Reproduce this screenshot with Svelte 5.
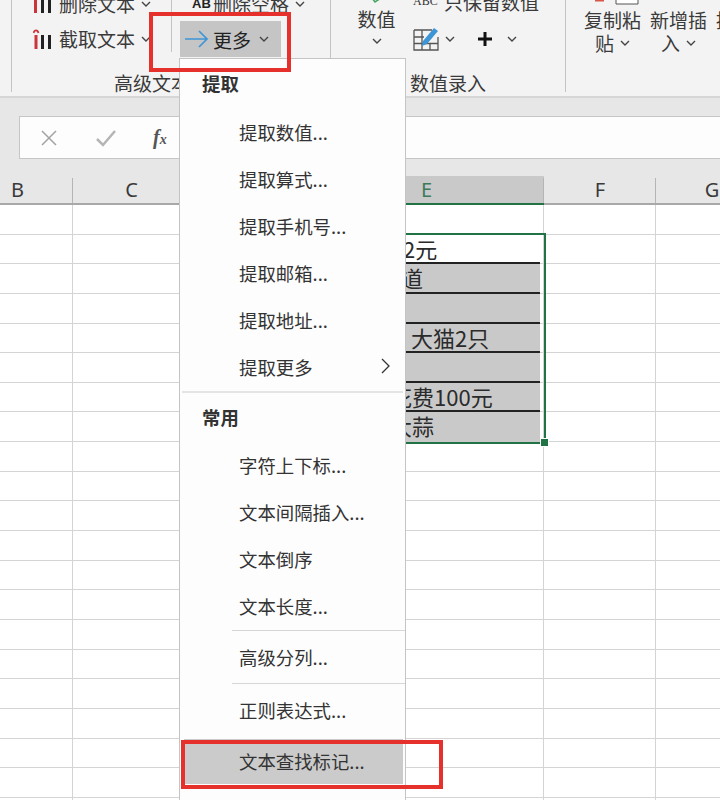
<script>
	const rows = [
		{ text: '', selected: false },
		{ text: '2元', left: 96, selected: false, lined: true },
		{ text: '道', left: 94, selected: true, lined: true },
		{ text: '', selected: true, lined: true },
		{ text: '大猫2只', left: 104, selected: true, lined: true },
		{ text: '', selected: true, lined: true },
		{ text: '花费100元', left: 83, selected: true, lined: true },
		{ text: '大蒜', left: 83, selected: true, lined: false },
		...Array(14).fill({ text: '', selected: false })
	];

	const extractItems = ['提取数值...', '提取算式...', '提取手机号...', '提取邮箱...', '提取地址...'];
	const commonItems = ['字符上下标...', '文本间隔插入...', '文本倒序', '文本长度...'];
</script>

<div class="page">
	<header class="ribbon">
		<section class="group text-group">
			<div class="tall">
				<div class="col col-left">
					<div class="tool">
						<svg class="bars" viewBox="0 0 18 20" width="18" height="20">
							<rect x="1" y="4" width="3" height="15" fill="#c9353a" />
							<rect x="8" y="4" width="3" height="15" fill="#222" />
							<rect x="15" y="4" width="3" height="15" fill="#222" />
						</svg>
						<span>删除文本</span>
						<svg class="chev" viewBox="0 0 10 6" width="10" height="6"><path d="M1 1l4 4 4-4" /></svg>
					</div>
					<div class="tool">
						<svg class="bars" viewBox="0 0 18 22" width="18" height="22">
							<path d="M0.5 5C1.5 1.5 4.5 1.5 5.5 5" fill="none" stroke="#c9353a" stroke-width="1.8" />
							<rect x="1.5" y="7" width="3" height="14" fill="#c9353a" />
							<rect x="8" y="7" width="3" height="14" fill="#222" />
							<rect x="15" y="7" width="3" height="14" fill="#222" />
						</svg>
						<span>截取文本</span>
						<svg class="chev" viewBox="0 0 10 6" width="10" height="6"><path d="M1 1l4 4 4-4" /></svg>
					</div>
				</div>
				<div class="col col-mid">
					<div class="tool">
						<b class="ab">AB</b>
						<span>删除空格</span>
						<svg class="chev" viewBox="0 0 10 6" width="10" height="6"><path d="M1 1l4 4 4-4" /></svg>
					</div>
					<div class="tool more">
						<svg viewBox="0 0 24 18" width="24" height="18">
							<path d="M0 9h22M14 1l8 8-8 8" fill="none" stroke="#3d95d6" stroke-width="1.7" />
						</svg>
						<span>更多</span>
						<svg class="chev" viewBox="0 0 10 6" width="10" height="6"><path d="M1 1l4 4 4-4" /></svg>
					</div>
				</div>
			</div>
			<div class="label label-text">高级文本</div>
		</section>

		<section class="group number-group">
			<div class="tall">
				<div class="stack number-stack">
					<svg class="tick" viewBox="0 0 12 6" width="12" height="6">
						<path d="M1 0l3 4 6-4" fill="none" stroke="#4aa564" stroke-width="1.6" />
					</svg>
					<span>数值</span>
					<svg class="chev" viewBox="0 0 10 6" width="10" height="6"><path d="M1 1l4 4 4-4" /></svg>
				</div>
				<div class="col col-num">
					<div class="tool">
						<span class="abc">ABC</span>
						<span>只保留数值</span>
					</div>
					<div class="tool icons">
						<svg viewBox="0 0 26 25" width="26" height="25">
							<path d="M1 4h18M1 4v20h24V11M1 11h10M1 17.500h24M9 4v20M17 17.500V24" fill="none" stroke="#555" stroke-width="1.300" />
							<path d="M10 15L21 2l4 3-11 13-5 2z" fill="#3d95d6" />
						</svg>
						<svg class="chev" viewBox="0 0 10 6" width="10" height="6"><path d="M1 1l4 4 4-4" /></svg>
						<svg class="plus" viewBox="0 0 14 14" width="14" height="14"><path d="M7 0v14M0 7h14" stroke="#111" stroke-width="3" /></svg>
						<svg class="chev" viewBox="0 0 10 6" width="10" height="6"><path d="M1 1l4 4 4-4" /></svg>
					</div>
				</div>
			</div>
			<div class="label label-number">数值录入</div>
		</section>

		<section class="group insert-group">
			<div class="stack">
				<svg class="paste-icon" viewBox="0 0 44 5" width="44" height="5">
					<rect x="0" y="0" width="9" height="1.500" fill="#d9564a" />
					<path d="M21 0v4h22V0" fill="#fff" stroke="#555" stroke-width="1" />
				</svg>
				<span>复制粘</span>
				<span class="line">贴 <svg class="chev" viewBox="0 0 10 6" width="10" height="6"><path d="M1 1l4 4 4-4" /></svg></span>
			</div>
			<div class="stack">
				<span class="offset">新增插</span>
				<span class="line">入 <svg class="chev" viewBox="0 0 10 6" width="10" height="6"><path d="M1 1l4 4 4-4" /></svg></span>
			</div>
			<div class="stack"><span class="offset">提</span></div>
		</section>
	</header>

	<div class="formula-area">
		<div class="formula-box">
			<svg viewBox="0 0 18 18" width="18" height="18"><path d="M2 2l14 14M16 2L2 16" stroke="#a3a3a3" stroke-width="1.500" /></svg>
			<svg viewBox="0 0 22 18" width="22" height="18"><path d="M2 10l6 6L20 2" fill="none" stroke="#b5b5b5" stroke-width="2.500" /></svg>
			<span class="fx">f<small>x</small></span>
		</div>
	</div>

	<div class="col-head">
		<div class="hd b">B</div>
		<div class="hd c">C</div>
		<div class="hd d">D</div>
		<div class="hd e">E</div>
		<div class="hd f">F</div>
		<div class="hd g">G</div>
	</div>

	<div class="sheet">
		{#each rows as row}
			<div class="row">
				<div class="cell b"></div>
				<div class="cell c"></div>
				<div class="cell d"></div>
				<div class="cell e">
					<div class="fill" class:selected={row.selected} class:lined={row.lined} style="padding-left: {row.left ?? 0}px">{row.text}</div>
				</div>
				<div class="cell f"></div>
				<div class="cell g"></div>
			</div>
		{/each}
		<div class="selection"><i class="handle"></i></div>
	</div>

	<div class="menu">
		<div class="menu-title first">提取</div>
		{#each extractItems as item}
			<div class="menu-item">{item}</div>
		{/each}
		<div class="menu-item">提取更多
			<svg class="arrow" viewBox="0 0 10 16" width="10" height="16"><path d="M1 1l7 7-7 7" fill="none" stroke="#333" stroke-width="1.300" /></svg>
		</div>
		<div class="divider"></div>
		<div class="menu-title">常用</div>
		{#each commonItems as item}
			<div class="menu-item">{item}</div>
		{/each}
		<div class="divider short"></div>
		<div class="menu-item tall-item">高级分列...</div>
		<div class="divider short"></div>
		<div class="menu-item tall-item">正则表达式...</div>
		<div class="menu-item active">文本查找标记...</div>
	</div>

	<div class="mark mark-more"></div>
	<div class="mark mark-find"></div>
</div>

<style>
	:global(body) {
		margin: 0;
		background: #fff;
	}

	.page {
		position: relative;
		width: 720px;
		height: 800px;
		overflow: hidden;
		font-family: "Noto Sans CJK SC", "Noto Sans", sans-serif;
		font-size: 19px;
		color: #3a3a3a;
	}

	/* ribbon */
	.ribbon {
		display: flex;
		height: 98px;
		padding-left: 11px;
		box-sizing: border-box;
		background: #f3f3f3;
		border-bottom: 2px solid #d6d6d6;
		overflow: hidden;
	}

	.group {
		display: flex;
		flex-direction: column;
		flex: none;
		height: 92px;
		box-sizing: border-box;
	}

	.text-group {
		width: 319px;
		border-left: 1px solid #c4c4c4;
	}

	.number-group {
		width: 235px;
	}

	.insert-group {
		flex-direction: row;
		gap: 9px;
		padding-left: 18px;
		width: 160px;
		border-left: 1px solid #c4c4c4;
	}

	.tall {
		display: flex;
		height: 58px;
	}

	.col {
		display: flex;
		flex-direction: column;
		margin-top: -14px;
		height: 72px;
	}

	.col-left {
		width: 159px;
		padding-left: 21px;
		box-sizing: border-box;
	}

	.col-mid {
		width: 159px;
		height: 66px;
		padding-left: 8px;
		box-sizing: border-box;
		border-left: 1px solid #c4c4c4;
	}

	.tool {
		display: flex;
		align-items: center;
		height: 35px;
		flex: none;
		white-space: nowrap;
	}

	.bars {
		margin-right: 8px;
		flex: none;
	}

	.chev {
		flex: none;
		fill: none;
		stroke: #444;
		stroke-width: 1.4;
	}

	.tool .chev {
		margin-left: 6px;
	}

	.ab {
		width: 21px;
		margin-left: 12px;
		font: bold 13px "Liberation Sans", sans-serif;
		color: #222;
	}

	.more {
		width: 101px;
		height: 36px;
		padding-left: 5px;
		box-sizing: border-box;
		background: #c5c5c5;
		color: #222;
	}

	.more span {
		margin-left: 4px;
	}

	.more .chev {
		margin-left: 8px;
	}

	.label {
		margin-top: 15px;
		line-height: 20px;
		white-space: nowrap;
	}

	.label-text {
		padding-left: 102px;
	}

	.label-number {
		padding-left: 80px;
	}

	.number-group .tall {
		border-left: 1px solid #c4c4c4;
	}

	.stack {
		display: flex;
		flex-direction: column;
		align-items: center;
		line-height: 23px;
		white-space: nowrap;
	}

	.stack .line {
		display: flex;
		align-items: center;
		justify-content: center;
		gap: 6px;
	}

	.stack .offset {
		margin-top: 8px;
	}

	.paste-icon {
		margin: 0 0 3px 8px;
		flex: none;
	}

	.number-stack {
		width: 82px;
		padding: 0 0 0 9px;
		box-sizing: border-box;
		margin-top: -2px;
	}

	.tick {
		margin-bottom: 3px;
		flex: none;
	}

	.number-stack .chev {
		margin-top: 8px;
	}

	.col-num {
		margin-top: -16px;
		height: 74px;
	}

	.col-num .icons {
		margin-top: 2px;
	}

	.abc {
		width: 31px;
		font: 12px "Liberation Serif", serif;
		color: #333;
	}

	.icons .plus {
		margin-left: 23px;
	}

	.icons .plus + .chev {
		margin-left: 15px;
	}

	/* formula bar */
	.formula-area {
		height: 78px;
		box-sizing: border-box;
		padding: 18px 0 17px 19px;
		background: #e7e7e7;
	}

	.formula-box {
		display: flex;
		align-items: center;
		height: 43px;
		padding-left: 20px;
		box-sizing: border-box;
		background: #fdfdfd;
		border: 1px solid #c6c6c6;
		border-right: none;
	}

	.formula-box svg:nth-child(2) {
		margin-left: 37px;
	}

	.fx {
		margin-left: 36px;
		font: italic bold 20px "Liberation Serif", serif;
		color: #555;
	}

	.fx small {
		font-size: 14px;
	}

	/* sheet */
	.col-head {
		display: flex;
		margin-left: -38px;
		height: 29px;
		background: #e7e7e7;
		border-bottom: 2px solid #a8a8a8;
		box-sizing: border-box;
	}

	.hd {
		display: flex;
		flex: none;
		align-items: center;
		justify-content: center;
		box-sizing: border-box;
		font-family: "Noto Sans", sans-serif;
		font-size: 20px;
		line-height: 1;
		color: #3a3a3a;
		position: relative;
	}

	.hd + .hd::before {
		content: "";
		position: absolute;
		left: -1px;
		top: 2px;
		bottom: 0;
		width: 1px;
		background: #b5b5b5;
	}

	.b {
		width: 111px;
	}

	.c,
	.d {
		width: 117px;
	}

	.e {
		width: 237px;
	}

	.f,
	.g {
		width: 112px;
	}

	.hd.e {
		height: 29px;
		background: #c9c9c9;
		border-bottom: 2px solid #217346;
		color: #3d7a5a;
		padding-left: 2px;
	}

	.sheet {
		position: relative;
		margin-left: -38px;
		width: 800px;
	}

	.row {
		display: flex;
		height: 29.65px;
		box-sizing: border-box;
		border-bottom: 1px solid #d4d4d4;
	}

	.cell {
		box-sizing: border-box;
		border-right: 1px solid #d4d4d4;
		flex: none;
	}

	.fill {
		height: 29.65px;
		margin-right: 3px;
		box-sizing: border-box;
		font-size: 22px;
		line-height: 27px;
		white-space: nowrap;
		color: #2b2b2b;
		overflow: hidden;
	}

	.fill.selected {
		background: #c9c9c9;
	}

	.fill.lined {
		border-bottom: 2px solid #222;
	}

	.selection {
		position: absolute;
		left: 345px;
		top: 28px;
		width: 239px;
		height: 211px;
		box-sizing: border-box;
		border: 2px solid #217346;
	}

	.handle {
		position: absolute;
		right: -5px;
		bottom: -5px;
		width: 9px;
		height: 9px;
		background: #217346;
		border: 1px solid #fff;
		box-sizing: border-box;
	}

	/* dropdown */
	.menu {
		position: absolute;
		left: 179px;
		top: 58px;
		width: 227px;
		height: 742px;
		box-sizing: border-box;
		background: #fdfdfd;
		border: 1px solid #c4c4c4;
		border-bottom: none;
		font-size: 18.400px;
		color: #333;
	}

	.menu-title {
		height: 49px;
		padding-left: 22px;
		line-height: 49px;
		font-weight: 700;
	}

	.menu-title.first {
		height: 50px;
		line-height: 48px;
	}

	.menu-item {
		position: relative;
		height: 47px;
		padding-left: 59px;
		line-height: 46px;
		white-space: nowrap;
	}

	.tall-item {
		height: 52px;
		line-height: 52px;
	}

	.arrow {
		position: absolute;
		right: 14px;
		top: 14px;
	}

	.divider {
		height: 2px;
		margin: 0 2px;
		background: #e4e4e4;
	}

	.divider.short {
		height: 1px;
		margin: 0 0 0 52px;
		background: #d6d6d6;
	}

	.menu-item.active {
		margin: 3px 2px 0 4px;
		padding-left: 55px;
		height: 45px;
		line-height: 44px;
		background: #cbcbcb;
	}

	.mark {
		position: absolute;
		box-sizing: border-box;
		border: 4px solid #e6302b;
	}

	.mark-more {
		left: 149px;
		top: 12px;
		width: 142px;
		height: 60px;
	}

	.mark-find {
		left: 181px;
		top: 740px;
		width: 262px;
		height: 49px;
	}
</style>
